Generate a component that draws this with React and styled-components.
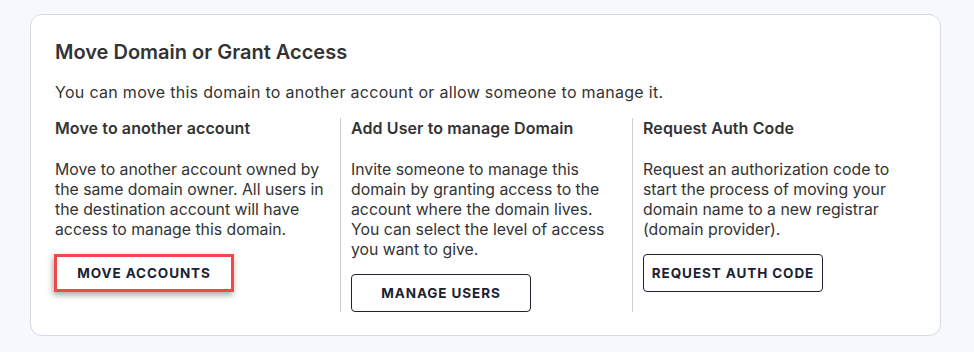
import React from 'react'
import styled, { createGlobalStyle } from 'styled-components'

const GlobalStyle = createGlobalStyle`
  html, body {
    margin: 0;
    padding: 0;
    background: #f5f8fc;
    font-family: Inter, "Noto Sans", "Liberation Sans", sans-serif;
    color: #333333;
  }
`

const Page = styled.div`
  padding: 14px 32px 15px 30px;
`

const Card = styled.section`
  width: 911px;
  box-sizing: border-box;
  background: #ffffff;
  border: 1px solid #d6dbe1;
  border-radius: 12px;
  padding: 24px 24px 23px 24px;
`

const Title = styled.h2`
  margin: 0;
  font-size: 20px;
  line-height: 26px;
  font-weight: 600;
  color: #333333;
`

const Intro = styled.p`
  margin: 17px 0 0;
  font-size: 16px;
  line-height: 20px;
  letter-spacing: 0.3px;
`

const Columns = styled.div`
  margin-top: 16px;
  display: grid;
  grid-template-columns: 285px 292px 1fr;
`

const Column = styled.div`
  display: flex;
  flex-direction: column;
  align-items: flex-start;
  padding-left: ${({ $first }) => ($first ? '0' : '10px')};
  padding-right: ${({ $first }) => ($first ? '2px' : '12px')};
  border-left: ${({ $first }) => ($first ? 'none' : '1px solid #cfcfcf')};
`

const Heading = styled.h3`
  margin: 0;
  font-size: 16px;
  line-height: 20px;
  font-weight: 600;
  letter-spacing: 0.1px;
  color: #333333;
`

const Body = styled.p`
  margin: 22px 0 0;
  font-size: 15.8px;
  line-height: 20px;
`

const Button = styled.button`
  margin-top: 14px;
  min-width: 180px;
  height: 38px;
  padding: 0 6px;
  box-sizing: border-box;
  background: #ffffff;
  border: 1px solid #1f2633;
  border-radius: 4px;
  font-family: Inter, "Noto Sans", "Liberation Sans", sans-serif;
  font-size: 13.5px;
  font-weight: 700;
  letter-spacing: 0.9px;
  color: #1a2233;
  cursor: pointer;

  ${({ $highlight }) =>
    $highlight &&
    `
    border: 3px solid #f24848;
    border-radius: 0;
    margin-left: -1px;
    box-shadow: -1px 3px 6px rgba(0, 0, 0, 0.35);
  `}
`

const options = [
  {
    title: 'Move to another account',
    text: 'Move to another account owned by the same domain owner. All users in the destination account will have access to manage this domain.',
    action: 'MOVE ACCOUNTS',
    highlight: true
  },
  {
    title: 'Add User to manage Domain',
    text: 'Invite someone to manage this domain by granting access to the account where the domain lives. You can select the level of access you want to give.',
    action: 'MANAGE USERS'
  },
  {
    title: 'Request Auth Code',
    text: 'Request an authorization code to start the process of moving your domain name to a new registrar (domain provider).',
    action: 'REQUEST AUTH CODE'
  }
]

export default function App() {
  return (
    <Page>
      <GlobalStyle />
      <Card>
        <Title>Move Domain or Grant Access</Title>
        <Intro>You can move this domain to another account or allow someone to manage it.</Intro>
        <Columns>
          {options.map((o, i) => (
            <Column key={o.title} $first={i === 0}>
              <Heading>{o.title}</Heading>
              <Body>{o.text}</Body>
              <Button $highlight={o.highlight}>{o.action}</Button>
            </Column>
          ))}
        </Columns>
      </Card>
    </Page>
  )
}
